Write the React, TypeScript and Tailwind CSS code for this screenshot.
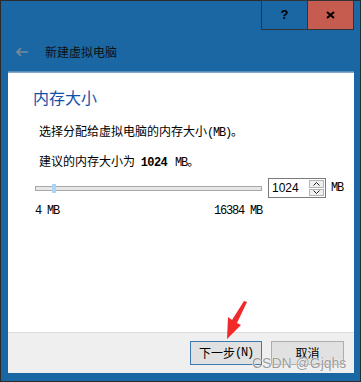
import React from "react";

const cjk = { fontFamily: '"Noto Sans CJK SC", "Liberation Sans", sans-serif' };
const mono = { fontFamily: '"Liberation Mono", "Noto Sans CJK SC", monospace' };

export default function App() {
  return (
    <div
      className="relative w-[361px] h-[382px] border border-[#2b2b2b] bg-[#1a67a3] flex flex-col text-[12px] text-black"
      style={cjk}
    >
      {/* title bar */}
      <div className="flex h-[29px] justify-end pr-[6px] -mt-px">
        <div className="w-[47px] h-[30px] border border-[#333] flex items-center justify-center font-bold text-[13px] text-black" style={{ fontFamily: '"Liberation Sans", sans-serif' }}>
          ?
        </div>
        <div className="w-[46px] h-[30px] border border-l-0 border-[#333] bg-[#c65c50] flex items-center justify-center">
          <svg width="9" height="8" viewBox="0 0 9 8">
            <path d="M1 1 L8 7 M8 1 L1 7" stroke="#000" strokeWidth="2" />
          </svg>
        </div>
      </div>

      {/* header */}
      <div className="flex h-[42px] items-center pt-[4px] pl-[14px]">
        <svg width="14" height="10" viewBox="0 0 14 10">
          <path d="M13 5 H2 M6 1 L2 5 L6 9" stroke="#7b8b9b" strokeWidth="1.6" fill="none" />
        </svg>
        <span className="ml-[16px] text-[12px] text-[#111]">新建虚拟电脑</span>
      </div>

      {/* shadow */}
      <div className="ml-[7px] mr-[6px] h-[2px] bg-gradient-to-b from-[#3f7fb3] to-[#9ab8d2]" />

      {/* panel */}
      <div className="ml-[7px] mr-[6px] h-[259px] bg-white flex flex-col">
        <div className="pl-[25px] pt-[14px] h-[47px] text-[16px] leading-[20px] text-[#1250a8]">内存大小</div>
        <div className="pl-[31px] leading-[16px] mt-[3px]">
          选择分配给虚拟电脑的内存大小<span style={mono} className="tracking-[-1.2px]">(MB)</span>。
        </div>
        <div className="pl-[31px] leading-[16px] mt-[12px]">
          建议的内存大小为 <b style={mono} className="ml-[3px] tracking-[-0.6px]">1024</b>
          <span style={mono} className="ml-[8px] tracking-[-1.2px]">MB</span>。
        </div>
        <div className="flex items-center pl-[27px] mt-[7px] h-[20px]">
          <div className="relative w-[227px] h-[5px] border border-[#a8a8a8] bg-[#e7e7e7]">
            <div className="absolute left-[16px] -top-[3px] w-[4px] h-[9px] bg-[#a9d6f6]" />
          </div>
          <div className="ml-[6px] w-[58px] h-[20px] border border-[#7a7a7a] flex bg-white">
            <span className="flex-1 pl-[3px] leading-[18px] text-[12px]" style={{ fontFamily: '"Liberation Sans", sans-serif' }}>1024</span>
            <div className="w-[17px] flex flex-col p-px gap-px">
              <div className="flex-1 bg-[#f0f0f0] border border-[#b4b4b4] flex items-center justify-center">
                <svg width="7" height="4" viewBox="0 0 7 4"><path d="M0.5 3.5 L3.5 0.5 L6.5 3.5" stroke="#222" fill="none" /></svg>
              </div>
              <div className="flex-1 bg-[#f0f0f0] border border-[#b4b4b4] flex items-center justify-center">
                <svg width="7" height="4" viewBox="0 0 7 4"><path d="M0.5 0.5 L3.5 3.5 L6.5 0.5" stroke="#222" fill="none" /></svg>
              </div>
            </div>
          </div>
          <span className="ml-[5px] tracking-[-1.2px]" style={mono}>MB</span>
        </div>
        <div className="flex pl-[27px] w-[254px] justify-between mt-[6px] leading-[14px]" style={mono}>
          <span className="tracking-[-1.2px]">4 MB</span>
          <span className="tracking-[-1.2px]">16384 MB</span>
        </div>
      </div>

      {/* separator */}
      <div className="ml-[7px] mr-[6px] h-px bg-[#dcdcdc]" />

      {/* footer */}
      <div className="ml-[7px] mr-[6px] h-[40px] bg-[#efefef] flex justify-end items-start pt-[8px] pr-[10px] gap-[9px]">
        <div className="w-[72px] h-[24px] border border-[#3d7ab2] bg-[#e1e1e1] flex items-center justify-center">
          下一步<span style={mono} className="tracking-[-1.2px]">(N)</span>
        </div>
        <div className="w-[73px] h-[24px] border border-[#adadad] bg-[#e1e1e1] flex items-center justify-center">
          取消
        </div>
      </div>

      {/* red arrow overlay */}
      <svg className="absolute left-[219px] top-[299px]" width="32" height="42" viewBox="0 0 32 42">
        <path d="M27 2 L17 23 L21 25 L7 39 L8 17 L12 20 L24 1 Z" fill="#f02a2a" />
      </svg>

      {/* watermark */}
      <div
        className="absolute left-[251px] top-[354px] text-[14px] leading-[16px] text-[#9a9a9a]"
        style={{ fontFamily: '"Liberation Sans", sans-serif', textShadow: "0 0 1px #fff, 0 0 1px #fff" }}
      >
        CSDN @Gjqhs
      </div>
    </div>
  );
}
